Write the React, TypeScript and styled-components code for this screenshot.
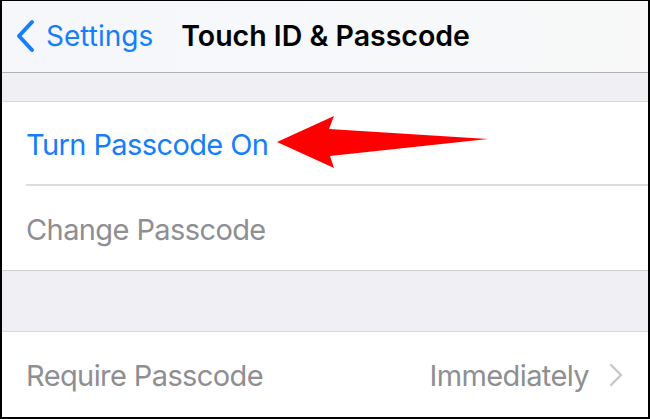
import React from "react";
import styled, { createGlobalStyle } from "styled-components";

const Global = createGlobalStyle`
  html, body { margin: 0; padding: 0; background: #ffffff; }
  body { font-family: Inter, "Noto Sans", "Liberation Sans", sans-serif; }
  * { box-sizing: border-box; }
`;

const Frame = styled.div`
  position: relative;
  width: 650px;
  height: 419px;
  overflow: hidden;
  border-style: solid;
  border-color: #000;
  border-width: 1px 2px 2px 2px;
  background: #efeff4;
  display: flex;
  flex-direction: column;
`;

const NavBar = styled.div`
  height: 72px;
  flex: none;
  background: linear-gradient(90deg, #f5f7fa 0%, #f7f8fa 60%, #f8f8f8 100%);
  border-bottom: 1px solid #b1b1b3;
  display: flex;
  align-items: center;
  padding-left: 12px;
`;

const BackButton = styled.div`
  display: flex;
  align-items: center;
  gap: 10px;
  color: #147efb;
  font-size: 28px;
  letter-spacing: 0;
  margin-top: -2px;
`;

const Title = styled.div`
  margin-left: 28px;
  margin-top: -2px;
  font-size: 28.5px;
  font-weight: 600;
  letter-spacing: 0;
  color: #000;
`;

const GroupGap = styled.div<{ $h: number }>`
  height: ${(p) => p.$h}px;
  flex: none;
  background: #efeff4;
`;

const Group = styled.div`
  flex: none;
  background: #fff;
  border-top: 1px solid #d9d9dd;
  border-bottom: 1px solid #cfcfd3;
  display: flex;
  flex-direction: column;
`;

const LastGroup = styled(Group)`
  flex: 1;
  border-bottom: none;
`;

const Row = styled.div<{ $sep?: boolean }>`
  height: 84px;
  margin-left: 24px;
  padding-right: 25px;
  padding-top: 2px;
  display: flex;
  align-items: center;
  justify-content: space-between;
  border-bottom: ${(p) => (p.$sep ? "2px solid #dcdcdf" : "none")};
`;

const Label = styled.span<{ $color: string }>`
  font-size: 29px;
  letter-spacing: -0.6px;
  color: ${(p) => p.$color};
`;

const Detail = styled.div`
  display: flex;
  align-items: center;
  gap: 20px;
  color: #8e8e93;
  font-size: 29px;
  letter-spacing: -0.6px;
`;

const ArrowSvg = styled.svg`
  position: absolute;
  left: 268px;
  top: 109px;
`;

const BackChevron = () => (
  <svg width="22" height="34" viewBox="0 0 22 34">
    <path d="M18 3 L5 17 L18 31" fill="none" stroke="#147efb" strokeWidth="4" strokeLinecap="round" strokeLinejoin="round" />
  </svg>
);

const Disclosure = () => (
  <svg width="14" height="24" viewBox="0 0 14 24">
    <path d="M2 2 L12 12 L2 22" fill="none" stroke="#c7c7cc" strokeWidth="2.4" strokeLinecap="round" strokeLinejoin="round" />
  </svg>
);

export default function App() {
  return (
    <>
      <Global />
      <Frame>
        <NavBar>
          <BackButton>
            <BackChevron />
            <span>Settings</span>
          </BackButton>
          <Title>Touch ID &amp; Passcode</Title>
        </NavBar>
        <GroupGap $h={28} />
        <Group>
          <Row $sep>
            <Label $color="#147efb">Turn Passcode On</Label>
          </Row>
          <Row>
            <Label $color="#8e8e93">Change Passcode</Label>
          </Row>
        </Group>
        <GroupGap $h={60} />
        <LastGroup>
          <Row>
            <Label $color="#8e8e93">Require Passcode</Label>
            <Detail>
              <span>Immediately</span>
              <Disclosure />
            </Detail>
          </Row>
        </LastGroup>
        <ArrowSvg width="222" height="62" viewBox="0 0 222 62">
          <polygon points="7,32 64,6 59,19 218,29 60,46 64,58" fill="#ff0000" />
        </ArrowSvg>
      </Frame>
    </>
  );
}
